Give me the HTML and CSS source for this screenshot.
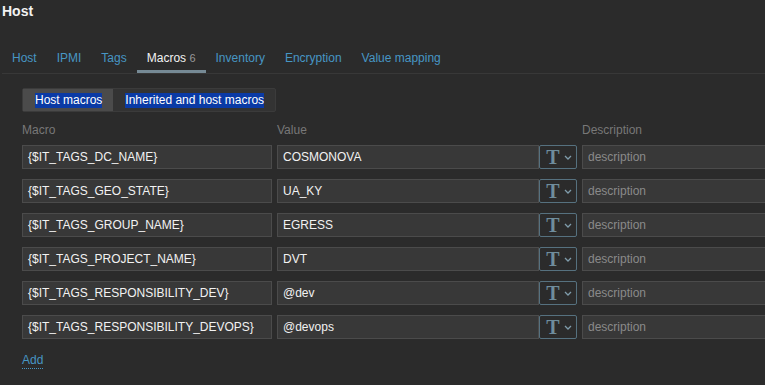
FILE: index.html
```html
<!DOCTYPE html>
<html>
<head>
<meta charset="utf-8">
<link rel="stylesheet" href="styles.css">
</head>
<body>
<div class="page">
  <h1 class="title">Host</h1>
  <nav class="tabs">
    <a class="tab">Host</a>
    <a class="tab">IPMI</a>
    <a class="tab">Tags</a>
    <a class="tab active">Macros <span class="count">6</span></a>
    <a class="tab">Inventory</a>
    <a class="tab">Encryption</a>
    <a class="tab">Value mapping</a>
  </nav>
  <div class="content">
    <div class="segmented">
      <span class="seg selected"><span class="sel">Host macros</span></span>
      <span class="seg"><span class="sel">Inherited and host macros</span></span>
    </div>
    <div class="grid">
      <div class="head">Macro</div>
      <div class="head">Value</div>
      <div class="head"></div>
      <div class="head">Description</div>

      <div class="inp macro">{$IT_TAGS_DC_NAME}</div>
      <div class="inp value">COSMONOVA</div>
      <div class="tbtn"><span class="t">T</span><svg class="chev" width="8" height="5" viewBox="0 0 8 5"><path d="M1 1 L4 4 L7 1" fill="none" stroke="#7f9cab" stroke-width="1.3"/></svg></div>
      <div class="inp ph">description</div>

      <div class="inp macro">{$IT_TAGS_GEO_STATE}</div>
      <div class="inp value">UA_KY</div>
      <div class="tbtn"><span class="t">T</span><svg class="chev" width="8" height="5" viewBox="0 0 8 5"><path d="M1 1 L4 4 L7 1" fill="none" stroke="#7f9cab" stroke-width="1.3"/></svg></div>
      <div class="inp ph">description</div>

      <div class="inp macro">{$IT_TAGS_GROUP_NAME}</div>
      <div class="inp value">EGRESS</div>
      <div class="tbtn"><span class="t">T</span><svg class="chev" width="8" height="5" viewBox="0 0 8 5"><path d="M1 1 L4 4 L7 1" fill="none" stroke="#7f9cab" stroke-width="1.3"/></svg></div>
      <div class="inp ph">description</div>

      <div class="inp macro">{$IT_TAGS_PROJECT_NAME}</div>
      <div class="inp value">DVT</div>
      <div class="tbtn"><span class="t">T</span><svg class="chev" width="8" height="5" viewBox="0 0 8 5"><path d="M1 1 L4 4 L7 1" fill="none" stroke="#7f9cab" stroke-width="1.3"/></svg></div>
      <div class="inp ph">description</div>

      <div class="inp macro">{$IT_TAGS_RESPONSIBILITY_DEV}</div>
      <div class="inp value">@dev</div>
      <div class="tbtn"><span class="t">T</span><svg class="chev" width="8" height="5" viewBox="0 0 8 5"><path d="M1 1 L4 4 L7 1" fill="none" stroke="#7f9cab" stroke-width="1.3"/></svg></div>
      <div class="inp ph">description</div>

      <div class="inp macro">{$IT_TAGS_RESPONSIBILITY_DEVOPS}</div>
      <div class="inp value">@devops</div>
      <div class="tbtn"><span class="t">T</span><svg class="chev" width="8" height="5" viewBox="0 0 8 5"><path d="M1 1 L4 4 L7 1" fill="none" stroke="#7f9cab" stroke-width="1.3"/></svg></div>
      <div class="inp ph">description</div>
    </div>
    <a class="add">Add</a>
  </div>
</div>
</body>
</html>
```
FILE: styles.css
```css
html, body {
  margin: 0;
  padding: 0;
  background: #2b2b2b;
  overflow: hidden;
}
body {
  font-family: "Liberation Sans", Arial, sans-serif;
  font-size: 12px;
  color: #f2f2f2;
}
.page {
  width: 765px;
  height: 385px;
}
.title {
  margin: 0;
  padding: 3px 0 0 2px;
  font-size: 14px;
  font-weight: bold;
  line-height: 17px;
  color: #f2f2f2;
}
.tabs {
  display: flex;
  margin: 29px 0 0 2px;
  border-bottom: 1px solid #383838;
  height: 24px;
}
.tab {
  display: block;
  padding: 2px 10px 0;
  line-height: 14px;
  height: 19px;
  color: #4796c4;
  border-bottom: 3px solid transparent;
}
.tab.active {
  color: #f2f2f2;
  border-bottom-color: #768a95;
}
.count {
  color: #999;
  font-size: 11px;
}
.content {
  padding: 14px 0 0 22px;
}
.segmented {
  display: inline-flex;
  border: 1px solid #3b3b3b;
  background: #333333;
  border-radius: 2px;
  height: 22px;
}
.seg {
  display: flex;
  align-items: center;
  padding: 0 11px 0 12px;
}
.seg.selected {
  background: #4b4b4b;
}
.sel {
  background: #0a3aa5;
  color: #ffffff;
  line-height: 15px;
  font-size: 12px;
}
.grid {
  display: grid;
  grid-template-columns: 255px 262px 43px 1fr;
  column-gap: 0;
  row-gap: 10px;
  margin-top: 10px;
}
.grid .head {
  color: #787878;
  line-height: 16px;
  margin-bottom: -3px;
}
.inp {
  height: 22px;
  border: 1px solid #4b4b4b;
  background: #383838;
  line-height: 22px;
  padding: 0 5px;
  white-space: nowrap;
  overflow: hidden;
  color: #f2f2f2;
}
.inp.macro { width: 238px; }
.inp.value { width: 250px; }
.inp.ph {
  color: #8a8a8a;
  width: 200px;
}
.tbtn {
  height: 22px;
  width: 36px;
  border: 1px solid #56717f;
  border-radius: 2px;
  display: flex;
  align-items: center;
  justify-content: center;
  gap: 4px;
  background: #2b2b2b;
}
.t {
  font-family: "Liberation Serif", "Times New Roman", serif;
  font-weight: bold;
  font-size: 20px;
  line-height: 20px;
  color: #6f8d9c;
  margin-left: 2px;
}
.chev {
  display: block;
  margin-top: 1px;
}
.add {
  display: inline-block;
  margin-top: 14px;
  color: #4796c4;
  line-height: 15px;
  border-bottom: 1px dotted #4796c4;
}
```
